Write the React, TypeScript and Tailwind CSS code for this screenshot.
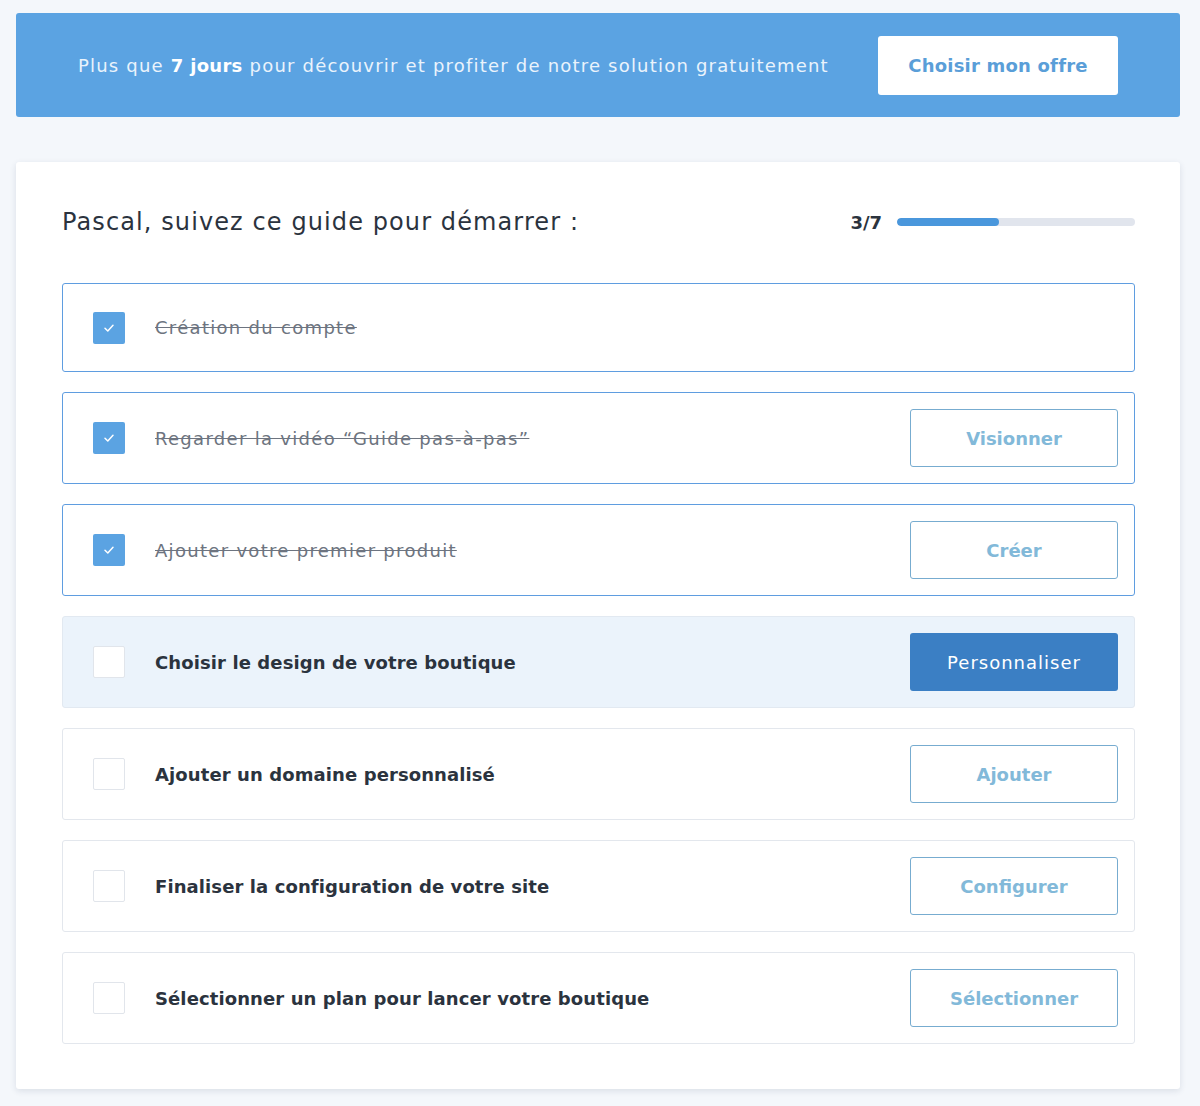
import React from "react";

type Step = {
  label: string;
  done: boolean;
  action?: string;
  active?: boolean;
};

const steps: Step[] = [
  { label: "Création du compte", done: true },
  { label: "Regarder la vidéo “Guide pas-à-pas”", done: true, action: "Visionner" },
  { label: "Ajouter votre premier produit", done: true, action: "Créer" },
  { label: "Choisir le design de votre boutique", done: false, action: "Personnaliser", active: true },
  { label: "Ajouter un domaine personnalisé", done: false, action: "Ajouter" },
  { label: "Finaliser la configuration de votre site", done: false, action: "Configurer" },
  { label: "Sélectionner un plan pour lancer votre boutique", done: false, action: "Sélectionner" },
];

const Check = () => (
  <svg width="14" height="14" viewBox="0 0 14 14" fill="none">
    <path d="M3 7.3L5.8 10L11 4.3" stroke="white" strokeWidth="1.5" strokeLinecap="round" strokeLinejoin="round" />
  </svg>
);

const StepRow = ({ step }: { step: Step }) => {
  let box = "border-[#e3e7ed] bg-white";
  if (step.done) box = "border-[#5f9de0] bg-white";
  if (step.active) box = "border-[#e2e9f1] bg-[#ebf3fb]";

  return (
    <div className={`flex items-center min-h-[89px] pl-[30px] pr-4 py-4 border rounded-[3px] ${box}`}>
      {step.done ? (
        <div className="w-8 h-8 rounded-[2px] bg-[#5ba3e2] flex items-center justify-center">
          <Check />
        </div>
      ) : (
        <div className="w-8 h-8 rounded-[2px] bg-white border border-[#e1e5eb]" />
      )}
      <span
        className={
          step.done
            ? "ml-[30px] flex-1 text-[18px] tracking-[1.3px] text-[#6d7480] line-through"
            : "ml-[30px] flex-1 text-[18px] tracking-[0.1px] font-bold text-[#2b333e]"
        }
      >
        {step.label}
      </span>
      {step.action &&
        (step.active ? (
          <button className="w-[208px] h-[58px] rounded-[3px] bg-[#3b7fc4] text-white text-[18px] tracking-[1px]">
            {step.action}
          </button>
        ) : (
          <button className="w-[208px] h-[58px] rounded-[3px] bg-white border border-[#77acd0] text-[#82b9d9] text-[18px] font-bold">
            {step.action}
          </button>
        ))}
    </div>
  );
};

export default function App() {
  return (
    <div className="min-h-[1106px] bg-[#f4f7fb] pl-4 pr-5 pt-[13px] pb-4 font-['DejaVu_Sans',sans-serif]">
      <div className="h-[104px] rounded-[3px] bg-[#5ba3e2] flex items-center justify-between pl-[62px] pr-[62px]">
        <p className="text-[18px] tracking-[1.2px] text-[#eaf3fc]">
          Plus que <b className="font-bold text-white tracking-[0.3px]">7 jours</b> pour découvrir et profiter de notre solution gratuitement
        </p>
        <button className="w-[240px] h-[59px] rounded-[3px] bg-white text-[#5a9ed8] text-[18px] font-bold tracking-[0.2px]">
          Choisir mon offre
        </button>
      </div>

      <div className="mt-[45px] bg-white rounded-[3px] shadow-[0_2px_6px_rgba(30,50,80,0.12)] pl-[46px] pr-[45px] pt-[40px] pb-[45px]">
        <div className="flex items-center justify-between h-[40px]">
          <h1 className="text-[24px] tracking-[1.1px] text-[#2b333e]">Pascal, suivez ce guide pour démarrer :</h1>
          <div className="flex items-center gap-[15px]">
            <span className="text-[18px] font-bold text-[#2b333e]">3/7</span>
            <div className="w-[238px] h-2 rounded-full bg-[#e1e5ed] overflow-hidden">
              <div className="h-full w-[43%] rounded-full bg-[#4a97dc]" />
            </div>
          </div>
        </div>

        <div className="mt-[41px] flex flex-col gap-5">
          {steps.map((s) => (
            <StepRow key={s.label} step={s} />
          ))}
        </div>
      </div>
    </div>
  );
}
